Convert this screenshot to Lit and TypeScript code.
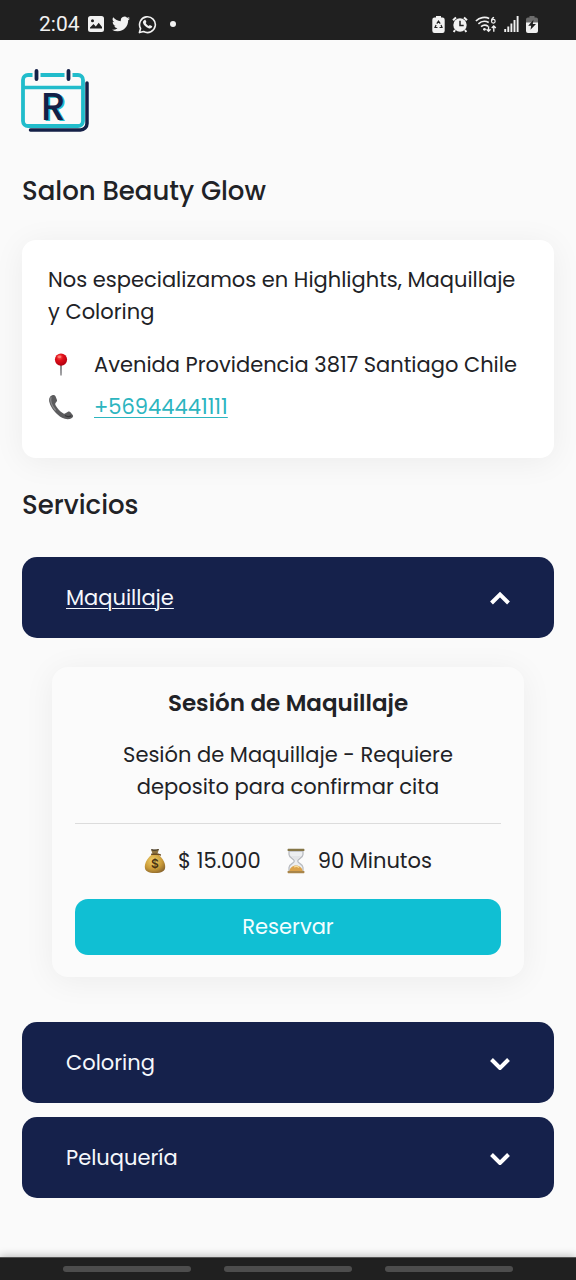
import { LitElement, html, css, svg, nothing } from "lit";
import { customElement, property, state } from "lit/decorators.js";

interface Service {
  title: string;
  description: string;
  price: string;
  duration: string;
}

interface Category {
  name: string;
  services: Service[];
}

const CATEGORIES: Category[] = [
  {
    name: "Maquillaje",
    services: [
      {
        title: "Sesión de Maquillaje",
        description: "Sesión de Maquillaje - Requiere deposito para confirmar cita",
        price: "$ 15.000",
        duration: "90 Minutos",
      },
    ],
  },
  { name: "Coloring", services: [] },
  { name: "Peluquería", services: [] },
];

const pinIcon = html`<svg width="24" height="24" viewBox="0 0 24 24" aria-hidden="true">
  <defs><radialGradient id="pin" cx=".4" cy=".3" r=".7"><stop offset="0" stop-color="#ff5a4e"/><stop offset=".4" stop-color="#e0101a"/><stop offset="1" stop-color="#b30010"/></radialGradient></defs>
  <path d="M11.300 11h1.400l-.2 11.500h-1z" fill="#4f4f53"/>
  <circle cx="12" cy="6.600" r="6.100" fill="url(#pin)"/>
  <ellipse cx="10.400" cy="3.800" rx="2" ry="1.300" fill="#ff9c92" opacity=".6"/>
</svg>`;

const phoneIcon = html`<svg width="26" height="26" viewBox="0 0 26 26" aria-hidden="true">
  <path d="M4.200 1.200C1.400 2.200.6 5.200 1.500 8.600c1.500 5.600 6.800 12.200 12.600 15.200 3.400 1.700 7.200 1.900 9.800.2 1.300-.9 1.500-1.900.8-3l-2-2.600c-.8-1-2-1.100-3.100-.5l-2.600 1.500c-.8.4-1.500.3-2.300-.3-3-2.200-5.600-5.100-7.300-8.200-.4-.8-.3-1.500.3-2.100l.8-1c.6-.7.7-1.500.3-2.400L7.500 2.200C6.800 1 5.700.7 4.200 1.200z" fill="#5c5c5e"/>
  <path d="M3 3.500c-1 3 .8 8.200 4.300 12.500" fill="none" stroke="#8b8b8d" stroke-width="1.200" stroke-linecap="round"/>
  <path d="M17 21.500c2 1.300 4.500 1.200 6.300.2" fill="none" stroke="#353537" stroke-width="1.200"/>
</svg>`;

const moneyIcon = html`<svg width="22" height="26" viewBox="0 0 22 26" aria-hidden="true">
  <defs><radialGradient id="bag" cx=".4" cy=".35" r=".75"><stop offset="0" stop-color="#f0cf68"/><stop offset=".6" stop-color="#c99a38"/><stop offset="1" stop-color="#83602c"/></radialGradient></defs>
  <path d="M7 1.200c2.600.8 5.400.8 8-.2l-1.600 5H8.600z" fill="#8e7442"/>
  <path d="M7.400 1.600c2.300.7 4.900.7 7.200-.1" fill="none" stroke="#3f3524" stroke-width="1.200"/>
  <path d="M8.300 6h5.500c3.500 3 7.400 7.600 7.400 12.700 0 4.600-3.600 6.300-10.200 6.300S.8 23.300.8 18.700C.8 13.600 4.800 9 8.300 6z" fill="url(#bag)"/>
  <path d="M7.700 6.200h6.600l2 .7" fill="none" stroke="#6a4c22" stroke-width="1.500" stroke-linecap="round"/>
  <text x="11" y="20" text-anchor="middle" font-family="Inter, sans-serif" font-weight="600" font-size="12" fill="#4a3212">$</text>
</svg>`;

const hourglassIcon = html`<svg width="20" height="26" viewBox="0 0 20 26" aria-hidden="true">
  <path d="M3 3v3.500C3 10 8.300 10.500 8.300 13S3 16 3 19.500V23h14v-3.500C17 16 11.700 15.500 11.700 13S17 10 17 6.500V3z" fill="#eceef0" stroke="#b9bcc1" stroke-width="1.300"/>
  <path d="M5 8h10c-1.500 2-4 2.500-4.500 4.500h-1C9 10.500 6.500 10 5 8z" fill="#e2e4e7"/>
  <path d="M3.500 23c0-3 3-5.500 6.500-5.500s6.500 2.500 6.500 5.500z" fill="#dba24a"/>
  <path d="M8 19c1.500-.8 3.500-.8 5 .5" fill="none" stroke="#f6dc9a" stroke-width="1.200"/>
  <rect x="1.600" y=".8" width="16.800" height="2.200" rx=".6" fill="#857647"/>
  <rect x="1.600" y="23" width="16.800" height="2.200" rx=".6" fill="#a98549"/>
</svg>`;

@customElement("status-bar")
export class StatusBar extends LitElement {
  static styles = css`
    :host { display: block; background: #202020; color: #f1f1f1; }
    .bar { display: flex; justify-content: space-between; align-items: center; height: 40px; padding: 8px 38px 0 39px; box-sizing: border-box; }
    .group { display: flex; align-items: center; gap: 8px; }
    .system { gap: 7px; }
    .time { font: 400 21px/24px Roboto, sans-serif; }
    .dot { width: 6px; height: 6px; margin-left: 5px; border-radius: 50%; background: #f1f1f1; }
    svg { display: block; }
  `;

  render() {
    return html`<div class="bar">
      <div class="group">
        <span class="time">2:04</span>
        <svg width="16" height="16" viewBox="0 0 16 16"><path fill-rule="evenodd" fill="#f1f1f1" d="M2.500 0h11A2.500 2.500 0 0 1 16 2.500v11a2.500 2.500 0 0 1-2.500 2.500h-11A2.500 2.500 0 0 1 0 13.500v-11A2.500 2.500 0 0 1 2.500 0zM2 12.500h12V11l-3.300-4.300L7.800 10.400 5.500 8 2 11.600zM4.500 3.300a1.500 1.500 0 1 0 0 3 1.500 1.500 0 0 0 0-3z"/></svg>
        <svg width="18" height="18" viewBox="0 0 24 24"><path fill="#f1f1f1" d="M23.950 4.570a10 10 0 0 1-2.820.77 4.960 4.960 0 0 0 2.160-2.720c-.95.550-2 .96-3.130 1.180a4.920 4.920 0 0 0-8.380 4.480C7.690 8.100 4.070 6.130 1.640 3.160a4.920 4.920 0 0 0 1.520 6.570 4.900 4.900 0 0 1-2.230-.61v.06a4.920 4.920 0 0 0 3.950 4.830 5 5 0 0 1-2.210.08 4.940 4.940 0 0 0 4.600 3.420A9.870 9.870 0 0 1 0 19.540a14 14 0 0 0 7.550 2.210c9.050 0 14-7.500 14-13.980l-.02-.64a10 10 0 0 0 2.420-2.560z"/></svg>
        <svg width="19" height="19" viewBox="0 0 20 20"><path d="M1.500 18.500l1.200-4.300a8.300 8.300 0 1 1 3.200 3.200z" fill="none" stroke="#f1f1f1" stroke-width="1.700" stroke-linejoin="round"/><path fill="#f1f1f1" d="M6.900 5.200c.4-.3.900-.3 1.100.2l.8 1.800c.1.300-.1.700-.7 1.300.8 1.500 1.800 2.400 3.400 3.100.7-.9 1-1.100 1.300-.9l1.800.9c.5.200.4.900.1 1.400-.7 1.100-2.100 1.400-3.600.9-2.800-.9-4.900-3-5.800-5.400-.5-1.400.5-2.700 1.600-3.300z"/></svg>
        <span class="dot"></span>
      </div>
      <div class="group system">
        <svg width="13" height="17" viewBox="0 0 13 17"><path fill="#f1f1f1" d="M4 0h5v1.500h1.500A2.200 2.200 0 0 1 12.700 3.700v11a2.200 2.200 0 0 1-2.200 2.200h-8A2.200 2.200 0 0 1 .3 14.700v-11a2.200 2.200 0 0 1 2.200-2.200H4z"/><path d="M4.800 7.600l1.700-2.500 1.700 2.500M9 9l1 2.500H7.500M5.500 11.500H3L4.100 9" fill="none" stroke="#202020" stroke-width="1.200"/></svg>
        <svg width="16" height="17" viewBox="0 0 16 17"><circle cx="8" cy="9" r="6.700" fill="#f1f1f1"/><path d="M1 4.200L4 1.400M15 4.200L12 1.400M3 14l-1.300 2M13 14l1.300 2" stroke="#f1f1f1" stroke-width="2"/><path d="M8 4.800V9.500h3.700" fill="none" stroke="#202020" stroke-width="1.500"/></svg>
        <svg width="22" height="17" viewBox="0 0 24 18"><g fill="none" stroke="#f1f1f1" stroke-width="1.800"><path d="M1 5.200C5 1.200 11 .3 15.500 2.400M3.700 8.300C7 5.200 11 4.700 15 6.800M6.600 11.400c2.200-2 5.200-2.200 7.600-.5"/><path d="M14.800 11v5M12.600 14.200l2.200 2.300 2.200-2.300M20.500 17v-6M18.300 12.800l2.200-2.300 2.200 2.300" stroke-width="1.500"/><path d="M20.800 1.200c-1.800.5-2.800 2-2.800 3.900" stroke-width="1.300"/><circle cx="20" cy="5.500" r="2" stroke-width="1.300"/></g><circle cx="10.300" cy="14.200" r="1.500" fill="#f1f1f1"/></svg>
        <svg width="15" height="16" viewBox="0 0 15 16"><path d="M1.200 16v-3M4.300 16v-5.500M7.400 16V7.500M10.500 16V4M13.600 16V0" stroke="#f1f1f1" stroke-width="1.900"/></svg>
        <svg width="12" height="17" viewBox="0 0 12 17"><path fill="#6c6c6c" d="M3.500 0h5v1.500H10a2 2 0 0 1 2 2V7H0V3.500a2 2 0 0 1 2-2h1.500z"/><path fill="#f1f1f1" d="M0 6.500h12V15a2 2 0 0 1-2 2H2a2 2 0 0 1-2-2z"/><path fill="#202020" d="M7.500 3.800L2.200 9.800h3l-.7 4L10 8H6.800z"/></svg>
      </div>
    </div>`;
  }
}

@customElement("service-card")
export class ServiceCard extends LitElement {
  @property({ attribute: false }) service!: Service;

  static styles = css`
    :host { display: block; }
    .card { padding: 20px 23px 22px; border-radius: 16px; background: #fbfbfb; box-shadow: 0 4px 32px rgba(0, 0, 0, 0.06); text-align: center; }
    .title { margin: 0; font-size: 23px; line-height: 32px; font-weight: 600; }
    .text { margin: 20px 24px; line-height: 32px; }
    .facts { display: flex; justify-content: center; gap: 25px; padding-top: 21px; border-top: 1px solid #dcdcdc; line-height: 32px; }
    .fact { display: flex; align-items: center; gap: 12px; }
    .book { display: block; width: 100%; height: 56px; margin-top: 22px; border: 0; border-radius: 13px; background: #10bfd3; color: #f4feff; font: inherit; cursor: pointer; }
    svg { display: block; }
  `;

  render() {
    const s = this.service;
    return html`<article class="card">
      <h3 class="title">${s.title}</h3>
      <p class="text">${s.description}</p>
      <div class="facts">
        <span class="fact">${moneyIcon}${s.price}</span>
        <span class="fact">${hourglassIcon}${s.duration}</span>
      </div>
      <button class="book" type="button">Reservar</button>
    </article>`;
  }
}

@customElement("app-root")
export class AppRoot extends LitElement {
  @state() private open = "Maquillaje";

  static styles = css`
    :host { display: flex; flex-direction: column; min-height: 100vh; background: #fafafa; color: #212226; font: 400 21px/32px Poppins, Inter, sans-serif; }
    .page { flex: 1; padding: 28px 22px 48px; }
    .logo { display: block; margin-left: -1px; }
    .heading { margin: 0; font-size: 26px; line-height: 40px; font-weight: 500; }
    .salon { margin-top: 38px; }
    .services { margin-top: 27px; }
    .about { margin-top: 29px; padding: 24px 26px 30px; border-radius: 14px; background: #fff; box-shadow: 0 4px 32px rgba(0, 0, 0, 0.06); }
    .intro { margin: 0 0 16px; }
    .contact { display: flex; align-items: center; gap: 20px; line-height: 42px; font-style: normal; }
    .mark { display: flex; justify-content: center; width: 26px; }
    .phone { color: #2cb5bf; text-underline-offset: 3px; text-decoration-thickness: 1px; }
    .list { display: flex; flex-direction: column; gap: 14px; margin-top: 32px; }
    .toggle { display: flex; align-items: center; justify-content: space-between; width: 100%; height: 81px; padding: 0 43px 0 44px; border: 0; border-radius: 15px; background: #15214b; color: #f5f8fc; font: inherit; cursor: pointer; }
    .toggle[aria-expanded="true"] .name { text-decoration: underline; text-underline-offset: 3px; text-decoration-thickness: 1px; }
    .group { margin: 0; font: inherit; }
    .panel { padding: 29px 30px 31px; }
    .nav { display: flex; align-items: center; gap: 7.5%; height: 23px; padding: 0 11%; box-sizing: border-box; border-top: 1px solid #555; background: #202020; box-shadow: 0 -1px 8px rgba(0, 0, 0, 0.25); }
    .key { flex: 1; height: 6px; padding: 0; border: 0; border-radius: 3px; background: #4d4d4d; }
  `;

  private toggle(name: string) {
    this.open = this.open === name ? "" : name;
  }

  private renderCategory(category: Category) {
    const expanded = this.open === category.name;
    return html`<section>
      <h3 class="group">
        <button class="toggle" type="button" aria-expanded=${expanded ? "true" : "false"} @click=${() => this.toggle(category.name)}>
          <span class="name">${category.name}</span>
          <svg width="22" height="14" viewBox="0 0 22 14" aria-hidden="true">
            ${expanded
              ? svg`<path d="M2.500 12L11 3.500 19.500 12" fill="none" stroke="#fff" stroke-width="4"/>`
              : svg`<path d="M2.500 3.500L11 12l8.500-8.500" fill="none" stroke="#fff" stroke-width="4"/>`}
          </svg>
        </button>
      </h3>
      ${expanded && category.services.length
        ? html`<div class="panel">${category.services.map((s) => html`<service-card .service=${s}></service-card>`)}</div>`
        : nothing}
    </section>`;
  }

  render() {
    return html`
      <status-bar></status-bar>
      <main class="page">
        <svg class="logo" width="69" height="65" viewBox="0 0 69 65" role="img" aria-label="R">
          <path d="M66 15v40.500a6.500 6.500 0 0 1-6.500 6.500H9.500" fill="none" stroke="#142047" stroke-width="3.500" stroke-linecap="round"/>
          <rect x="2" y="7" width="60" height="51" rx="5" fill="#fafafa" stroke="#21bccb" stroke-width="3.800"/>
          <path d="M2 19.500h60" stroke="#21bccb" stroke-width="3.500"/>
          <path d="M15.500 1v12M47.500 1v12" stroke="#fafafa" stroke-width="8"/>
          <path d="M15.500 3v8M47.500 3v8" stroke="#142047" stroke-width="3.800" stroke-linecap="round"/>
          <g font-family="Poppins, sans-serif" font-weight="500" font-size="39">
            <text x="21.500" y="52.500" fill="#21bccb">R</text>
            <text x="20" y="52" fill="#142047">R</text>
          </g>
        </svg>
        <h1 class="heading salon">Salon Beauty Glow</h1>
        <section class="about">
          <p class="intro">Nos especializamos en Highlights, Maquillaje y Coloring</p>
          <div class="contact"><span class="mark">${pinIcon}</span><span>Avenida Providencia 3817 Santiago Chile</span></div>
          <div class="contact"><span class="mark">${phoneIcon}</span><a class="phone" href="tel:+56944441111">+56944441111</a></div>
        </section>
        <h2 class="heading services">Servicios</h2>
        <div class="list">${CATEGORIES.map((c) => this.renderCategory(c))}</div>
      </main>
      <nav class="nav" aria-label="Sistema">
        <button class="key" type="button" aria-label="Recientes"></button>
        <button class="key" type="button" aria-label="Inicio"></button>
        <button class="key" type="button" aria-label="Atrás"></button>
      </nav>
    `;
  }
}
